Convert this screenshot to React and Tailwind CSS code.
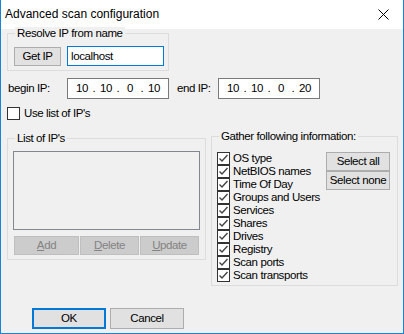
import React from "react";

const font = "font-['Liberation_Sans',Arial,sans-serif] text-[11.5px] tracking-[-0.4px] leading-[13px] text-black";

const gatherItems = [
  "OS type",
  "NetBIOS names",
  "Time Of Day",
  "Groups and Users",
  "Services",
  "Shares",
  "Drives",
  "Registry",
  "Scan ports",
  "Scan transports",
];

const Button = ({ children, className = "" }) => (
  <div className={`flex items-center justify-center border border-[#adadad] bg-[#e1e1e1] ${className}`}>
    {children}
  </div>
);

const DisabledButton = ({ first, rest, className = "" }) => (
  <div className={`flex items-center justify-center border border-[#bfbfbf] bg-[#cccccc] text-[#838383] ${className}`}>
    <span className="underline">{first}</span>
    {rest}
  </div>
);

const Group = ({ label, className = "", children }) => (
  <div className={`relative border border-[#dcdcdc] ${className}`}>
    <span className="absolute -top-[7px] left-[7px] bg-[#f0f0f0] px-[2px]">{label}</span>
    {children}
  </div>
);

const CheckBox = ({ checked }) => (
  <div className="w-[13px] h-[13px] border border-[#333333] bg-white flex-none">
    {checked && (
      <svg width="11" height="11" viewBox="0 0 11 11">
        <path d="M1.5 5.5 L4 8 L9.5 2" fill="none" stroke="#444444" strokeWidth="1.4" />
      </svg>
    )}
  </div>
);

const IpBox = ({ parts }) => (
  <div className="flex items-center w-[102px] h-[21px] border border-[#7a7a7a] bg-white pl-[4px]">
    {parts.map((p, i) => (
      <React.Fragment key={i}>
        <span className="w-[20px] text-center">{p}</span>
        {i < 3 && <span className="w-[4px] text-center">.</span>}
      </React.Fragment>
    ))}
  </div>
);

const App = () => {
  return (
    <div className={`w-[404px] h-[334px] flex flex-col border-x border-b border-[#1883d7] bg-[#f0f0f0] ${font}`}>
      <div className="h-[29px] flex-none bg-white flex items-center justify-between pl-[4px] pr-[14px]">
        <span className="text-[12px] tracking-[0px] leading-[16px] mt-[-1px]">Advanced scan configuration</span>
        <svg width="11" height="11" viewBox="0 0 11 11" className="mt-[-1px]">
          <path d="M0.5 0.5 L10.5 10.5 M10.5 0.5 L0.5 10.5" stroke="#000" strokeWidth="1" />
        </svg>
      </div>

      <div className="flex flex-col pl-[6px]">
        <Group label="Resolve IP from name" className="mt-[4px] w-[162px] h-[38px] pl-[6px] pt-[12px]">
          <div className="flex items-center gap-[6px]">
            <Button className="w-[47px] h-[19px]">Get IP</Button>
            <div className="w-[97px] h-[20px] border border-[#0078d7] bg-white flex items-center pl-[3px]">localhost</div>
          </div>
        </Group>

        <div className="flex items-center mt-[7px] h-[21px]">
          <span className="w-[60px] pl-[1px]">begin IP:</span>
          <IpBox parts={["10", "10", "0", "10"]} />
          <span className="w-[49px] pl-[8px]">end IP:</span>
          <IpBox parts={["10", "10", "0", "20"]} />
        </div>

        <div className="flex items-center gap-[4px] mt-[8px] h-[13px]">
          <CheckBox />
          <span>Use list of IP's</span>
        </div>

        <div className="flex items-start mt-[16px]">
          <Group label="List of IP's" className="mt-[2px] w-[199px] h-[122px] pl-[5px] pt-[12px]">
            <div className="w-[187px] h-[79px] border border-[#828790] bg-[#f0f0f0]" />
            <div className="flex gap-[1px] mt-[6px] ml-[1px]">
              <DisabledButton first="A" rest="dd" className="w-[65px] h-[19px]" />
              <DisabledButton first="D" rest="elete" className="w-[59px] h-[19px]" />
              <DisabledButton first="U" rest="pdate" className="w-[59px] h-[19px]" />
            </div>
          </Group>

          <Group label="Gather following information:" className="ml-[5px] w-[187px] h-[150px] pl-[5px] pt-[15px]">
            <div className="flex">
              <div className="flex flex-col w-[109px]">
                {gatherItems.map((item) => (
                  <div key={item} className="flex items-center gap-[3px] h-[13px]">
                    <CheckBox checked />
                    <span>{item}</span>
                  </div>
                ))}
              </div>
              <div className="flex flex-col">
                <Button className="w-[64px] h-[19px]">Select all</Button>
                <Button className="w-[64px] h-[19px]">Select none</Button>
              </div>
            </div>
          </Group>
        </div>

        <div className="flex gap-[4px] mt-[22px] ml-[25px]">
          <div className="w-[74px] h-[21px] border-2 border-[#0078d7] bg-[#e1e1e1] flex items-center justify-center">OK</div>
          <Button className="w-[74px] h-[21px]">Cancel</Button>
        </div>
      </div>
    </div>
  );
};

export default App;
